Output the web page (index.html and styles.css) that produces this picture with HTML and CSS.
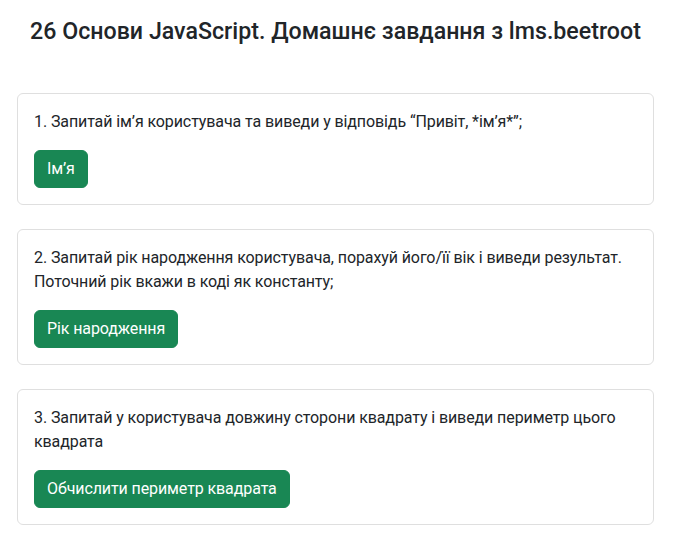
FILE: index.html
```html
<!DOCTYPE html>
<html lang="uk">
<head>
<meta charset="utf-8">
<title>26 Основи JavaScript</title>
<link rel="stylesheet" href="styles.css">
</head>
<body>
<main class="page">
  <h1 class="title">26 Основи JavaScript. Домашнє завдання з lms.beetroot</h1>
  <section class="card">
    <p class="task">1. Запитай ім’я користувача та виведи у відповідь “Привіт, *ім’я*”;</p>
    <button class="btn" type="button">Ім’я</button>
  </section>
  <section class="card">
    <p class="task">2. Запитай рік народження користувача, порахуй його/її вік і виведи результат. Поточний рік вкажи в коді як константу;</p>
    <button class="btn" type="button">Рік народження</button>
  </section>
  <section class="card">
    <p class="task">3. Запитай у користувача довжину сторони квадрату і виведи периметр цього квадрата</p>
    <button class="btn" type="button">Обчислити периметр квадрата</button>
  </section>
</main>
</body>
</html>
```
FILE: styles.css
```css
* { box-sizing: border-box; }
html, body { margin: 0; background: #fff; }
body {
  font-family: Roboto, "Noto Sans", sans-serif;
  font-size: 16px;
  line-height: 1.5;
  letter-spacing: -0.1px;
  color: #212529;
}
.page {
  padding: 18px 20px 0 17px;
  display: flex;
  flex-direction: column;
  gap: 24px;
}
.title {
  margin: 0 0 24px;
  font-size: 23.2px;
  font-weight: 500;
  line-height: 1.16;
  letter-spacing: 0;
  text-align: center;
}
.card {
  border: 1px solid #dfdfdf;
  border-radius: 6px;
  padding: 16px;
}
.task { margin: 0 0 16px; }
.btn {
  display: inline-block;
  font: inherit;
  letter-spacing: inherit;
  line-height: 24px;
  padding: 6px 12px;
  border: 1px solid #198754;
  border-radius: 6px;
  background: #198754;
  color: #fff;
}
```
